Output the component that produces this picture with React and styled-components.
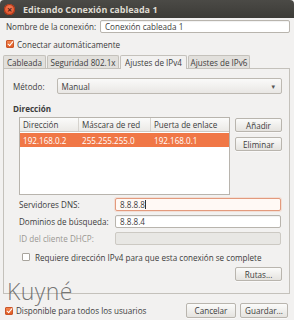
import React from 'react'
import styled, { createGlobalStyle, css } from 'styled-components'

const GlobalStyle = createGlobalStyle`
html, body {
  margin: 0;
  padding: 0;
}
body {
  width: 294px;
  height: 320px;
  overflow: hidden;
  background: #f2f1f0;
  font-family: "Open Sans", "DejaVu Sans", sans-serif;
  font-size: 8.1px;
  color: #3c3c3c;
  white-space: nowrap;
}
`

function App() {
    return (
        <Window>
            <GlobalStyle />
            <TitleBar>
                <CloseButton>×</CloseButton>
                <Title>Editando Conexión cableada 1</Title>
            </TitleBar>

            <Body>
                <NameRow>
                    <NameLabel>Nombre de la conexión:</NameLabel>
                    <TextInput>Conexión cableada 1</TextInput>
                </NameRow>

                <CheckRow>
                    <CheckBox checked />
                    <span>Conectar automáticamente</span>
                </CheckRow>

                <Tabs>
                    <Tab w={43}>Cableada</Tab>
                    <Tab w={72}>Seguridad 802.1x</Tab>
                    <Tab w={67} active>Ajustes de IPv4</Tab>
                    <Tab w={62}>Ajustes de IPv6</Tab>
                </Tabs>

                <Panel>
                    <MethodRow>
                        <span>Método:</span>
                        <Combo>
                            <span>Manual</span>
                            <Arrow>▾</Arrow>
                        </Combo>
                    </MethodRow>

                    <SectionTitle>Dirección</SectionTitle>

                    <AddressBlock>
                        <Table>
                            <HeaderRow>
                                <Cell w={59}>Dirección</Cell>
                                <Cell w={72}>Máscara de red</Cell>
                                <Cell w={80} last>Puerta de enlace</Cell>
                            </HeaderRow>
                            <DataRow selected>
                                <Cell w={59}>192.168.0.2</Cell>
                                <Cell w={72}>255.255.255.0</Cell>
                                <Cell w={80} last>192.168.0.1</Cell>
                            </DataRow>
                        </Table>
                        <SideButtons>
                            <Button>Añadir</Button>
                            <Button>Eliminar</Button>
                        </SideButtons>
                    </AddressBlock>

                    <FieldGrid>
                        <FieldLabel>Servidores DNS:</FieldLabel>
                        <FieldInput focused>8.8.8.8<Caret /></FieldInput>
                        <FieldLabel>Dominios de búsqueda:</FieldLabel>
                        <FieldInput>8.8.8.4</FieldInput>
                        <FieldLabel disabled>ID del cliente DHCP:</FieldLabel>
                        <FieldInput disabled />
                    </FieldGrid>

                    <RequireRow>
                        <CheckBox />
                        <span>Requiere dirección IPv4 para que esta conexión se complete</span>
                    </RequireRow>

                    <RoutesRow>
                        <Button>Rutas...</Button>
                    </RoutesRow>
                </Panel>

                <Footer>
                    <FooterCheck>
                        <CheckBox checked />
                        <span>Disponible para todos los usuarios</span>
                    </FooterCheck>
                    <FooterButtons>
                        <Button w={50} h={15}>Cancelar</Button>
                        <Button w={48} h={15}>Guardar...</Button>
                    </FooterButtons>
                </Footer>
            </Body>

            <Watermark>Kuyné</Watermark>
        </Window>
    )
}

const Window = styled.div`
position: relative;
width: 294px;
height: 320px;
display: flex;
flex-direction: column;
`
const TitleBar = styled.div`
height: 18px;
display: flex;
align-items: center;
gap: 8px;
padding-left: 4px;
background: linear-gradient(#4b4a46, #3c3b37);
border-radius: 4px 4px 0 0;
`
const CloseButton = styled.div`
width: 11px;
height: 11px;
border-radius: 50%;
background: radial-gradient(circle at 50% 35%, #f37a55, #d8461c);
box-shadow: inset 0 0 0 1px #a7371a;
color: #4a2317;
font-size: 9px;
line-height: 11px;
text-align: center;
font-weight: bold;
`
const Title = styled.div`
color: #dfdbd2;
font-weight: bold;
font-size: 9px;
`
const Body = styled.div`
flex: 1;
display: flex;
flex-direction: column;
padding: 0 4px 0 3px;
`
const NameRow = styled.div`
display: flex;
align-items: center;
height: 13px;
margin-top: 2px;
padding-left: 3px;
`
const NameLabel = styled.span`
width: 94px;
`
const inputBase = css`
box-sizing: border-box;
height: 13px;
display: flex;
align-items: center;
padding-left: 4px;
background: #ffffff;
border: 1px solid #b8b4ad;
border-radius: 2px;
box-shadow: inset 0 1px 1px rgba(0, 0, 0, 0.06);
`
const TextInput = styled.div`
${inputBase};
flex: 1;
`
const CheckRow = styled.div`
display: flex;
align-items: center;
gap: 3px;
height: 12px;
padding-left: 3px;
margin-top: 5px;
`
const FooterCheck = styled.div`
display: flex;
align-items: center;
gap: 3px;
padding-left: 2px;
`
const CheckBox = styled.span`
box-sizing: border-box;
width: 8px;
height: 8px;
border-radius: 1px;
flex-shrink: 0;
position: relative;
border: 1px solid ${p => (p.checked ? '#c9552a' : '#a8a49d')};
background: ${p => (p.checked ? 'linear-gradient(#f4864f, #e05a22)' : '#ffffff')};
${p =>
    p.checked &&
    css`
        &::after {
            content: '';
            position: absolute;
            left: 2px;
            top: -1px;
            width: 2px;
            height: 5px;
            border: solid #fff;
            border-width: 0 1.5px 1.5px 0;
            transform: rotate(40deg);
        }
    `}
`
const Tabs = styled.div`
display: flex;
margin-top: 4px;
height: 14px;
align-items: flex-end;
gap: 1px;
`
const Tab = styled.div`
box-sizing: border-box;
width: ${p => p.w}px;
height: ${p => (p.active ? '14px' : '13px')};
display: flex;
align-items: center;
justify-content: center;
border: 1px solid #c4c1bb;
border-bottom: none;
border-radius: 2px 2px 0 0;
background: ${p => (p.active ? '#f2f1f0' : '#e2e0dc')};
margin-bottom: ${p => (p.active ? '-1px' : '0')};
position: relative;
z-index: ${p => (p.active ? 1 : 0)};
`
const Panel = styled.div`
box-sizing: border-box;
height: 226px;
border: 1px solid #c4c1bb;
padding: 9px 7px 0 9px;
display: flex;
flex-direction: column;
`
const MethodRow = styled.div`
display: flex;
align-items: center;
gap: 12px;
height: 16px;
`
const Combo = styled.div`
flex: 1;
box-sizing: border-box;
height: 16px;
display: flex;
align-items: center;
justify-content: space-between;
padding: 0 6px 0 4px;
border: 1px solid #bdb9b2;
border-radius: 2px;
background: linear-gradient(#fafaf9, #e9e7e4);
`
const Arrow = styled.span`
font-size: 7px;
color: #555;
`
const SectionTitle = styled.div`
font-weight: bold;
margin-top: 9px;
`
const AddressBlock = styled.div`
display: flex;
gap: 5px;
margin-top: 3px;
padding-left: 6px;
`
const Table = styled.div`
box-sizing: border-box;
width: 211px;
height: 78px;
background: #ffffff;
border: 1px solid #b8b4ad;
`
const HeaderRow = styled.div`
display: flex;
height: 13px;
background: linear-gradient(#fbfbfa, #ebe9e6);
border-bottom: 1px solid #cdcac4;
`
const DataRow = styled.div`
display: flex;
height: 14px;
margin-top: 1px;
background: ${p => (p.selected ? '#f07746' : 'transparent')};
color: ${p => (p.selected ? '#ffffff' : 'inherit')};
`
const Cell = styled.div`
box-sizing: border-box;
width: ${p => p.w}px;
flex: ${p => (p.last ? 1 : 'none')};
display: flex;
align-items: center;
padding-left: 3px;
border-right: ${p => (p.last ? 'none' : '1px solid #d6d3ce')};
${DataRow} & {
    border-right: none;
}
`
const SideButtons = styled.div`
display: flex;
flex-direction: column;
gap: 5px;
padding-top: 1px;
`
const Button = styled.div`
box-sizing: border-box;
width: ${p => p.w || 47}px;
height: ${p => p.h || 14}px;
display: flex;
align-items: center;
justify-content: center;
border: 1px solid #b9b5ae;
border-radius: 2px;
background: linear-gradient(#fbfbfa, #e5e3df);
box-shadow: 0 1px 0 rgba(255, 255, 255, 0.6);
`
const FieldGrid = styled.div`
display: grid;
grid-template-columns: 96px 166px;
row-gap: 4px;
align-items: center;
margin-top: 3px;
padding-left: 6px;
`
const FieldLabel = styled.span`
color: ${p => (p.disabled ? '#9a9893' : 'inherit')};
`
const FieldInput = styled.div`
${inputBase};
height: 13px;
${p =>
    p.focused &&
    css`
        border-color: #e39a7d;
        background: #fff9f5;
        box-shadow: 0 0 0 1px rgba(240, 119, 70, 0.15);
    `}
${p =>
    p.disabled &&
    css`
        background: #e8e7e4;
        border-color: #ccc9c3;
        box-shadow: none;
    `}
`
const Caret = styled.span`
width: 1px;
height: 9px;
background: #333;
`
const RequireRow = styled.div`
display: flex;
align-items: center;
gap: 5px;
margin-top: 7px;
padding-left: 9px;
height: 10px;
`
const RoutesRow = styled.div`
display: flex;
justify-content: flex-end;
margin-top: 5px;
`
const Footer = styled.div`
display: flex;
justify-content: space-between;
align-items: center;
margin-top: 9px;
padding-right: 2px;
`
const FooterButtons = styled.div`
display: flex;
gap: 4px;
`
const Watermark = styled.div`
position: absolute;
left: 7px;
top: 275px;
font-family: "Open Sans", "DejaVu Sans", sans-serif;
font-size: 23px;
font-weight: 300;
letter-spacing: 0.4px;
color: rgba(95, 95, 95, 0.85);
pointer-events: none;
`

export default App
